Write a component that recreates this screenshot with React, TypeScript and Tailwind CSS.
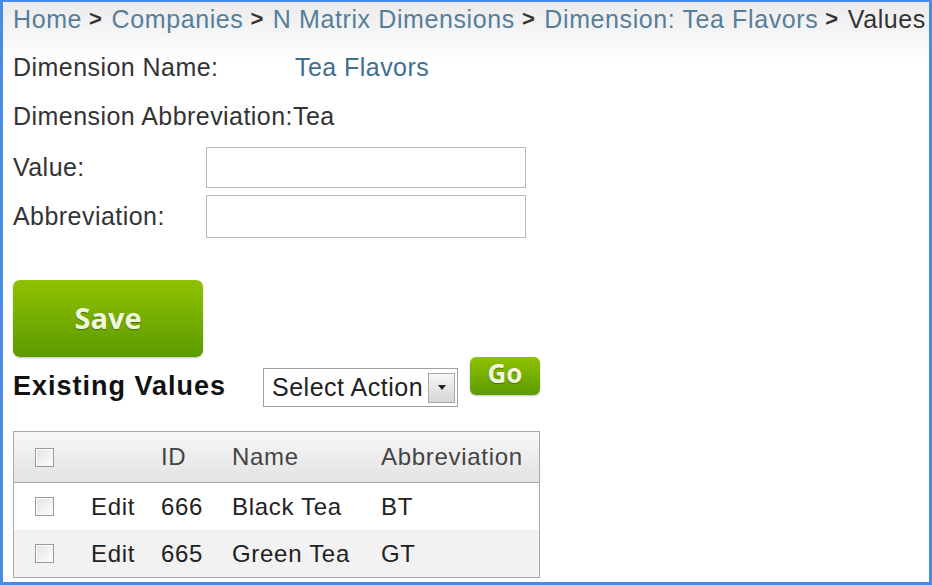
import React from 'react'

const crumbs = ['Home', 'Companies', 'N Matrix Dimensions', 'Dimension: Tea Flavors']

const rows = [
  { id: 666, name: 'Black Tea', abbr: 'BT' },
  { id: 665, name: 'Green Tea', abbr: 'GT' },
]

function Box() {
  return (
    <span className="block w-[19px] h-[19px] border border-[#9a9a9a] bg-[linear-gradient(135deg,#e2e2e2,#ffffff)] shadow-[inset_1px_1px_0_#fff]" />
  )
}

export default function App() {
  return (
    <div className="w-[932px] h-[585px] box-border border-[3px] border-t-2 border-[#4a8ae6] bg-[linear-gradient(to_bottom,#ebebeb_0px,#ffffff_62px)] font-['Liberation_Sans',Arial,sans-serif] text-[#333] overflow-hidden">
      {/* Breadcrumb */}
      <div className="pl-[10px] h-[34px] flex items-center text-[25px] leading-none whitespace-nowrap tracking-[0.6px]">
        {crumbs.map((c) => (
          <React.Fragment key={c}>
            <span className="text-[#567e9b]">{c}</span>
            <span className="font-bold text-[#333] text-[22px] ml-[7px] mr-[9px]">&gt;</span>
          </React.Fragment>
        ))}
        <span className="text-[#333]">Values</span>
      </div>

      <div className="pl-[10px] text-[25px] leading-none tracking-[0.45px]">
        <div className="mt-[14px] flex items-center h-[34px]">
          <span className="w-[282px]">Dimension Name:</span>
          <span className="text-[#3f6f8f]">Tea Flavors</span>
        </div>
        <div className="mt-[15px] flex items-center h-[34px]">
          Dimension Abbreviation:Tea
        </div>

        {/* Inputs */}
        <div className="mt-[14px] flex items-center">
          <span className="w-[193px]">Value:</span>
          <input className="w-[320px] h-[41px] border border-[#b9b9b9] bg-white outline-none" />
        </div>
        <div className="mt-[7px] flex items-center">
          <span className="w-[193px]">Abbreviation:</span>
          <input className="w-[320px] h-[43px] border border-[#b9b9b9] bg-white outline-none" />
        </div>

        <button className="mt-[42px] w-[190px] h-[77px] rounded-[7px] bg-[linear-gradient(to_bottom,#8fc200,#5c9a00)] shadow-[0_1px_2px_rgba(0,0,0,0.25)] font-['Open_Sans',sans-serif] font-bold text-[29px] tracking-normal text-[#f1f6df] [text-shadow:0_1px_1px_rgba(0,0,0,0.35)] flex items-center justify-center pb-[3px]">
          Save
        </button>

        {/* Existing Values bar */}
        <div className="flex items-start">
          <div className="mt-[13px] h-[32px] flex items-center w-[250px] font-bold text-[#111] text-[27px] tracking-[1px]">
            Existing Values
          </div>
          <div className="mt-[11px] w-[195px] h-[39px] border border-[#a0a0a0] bg-white flex items-center justify-between pl-[8px] pr-[2px]">
            <span className="text-[25px] tracking-[0.5px] text-[#222]">Select Action</span>
            <span className="w-[27px] h-[30px] border border-[#a8a8a8] bg-[linear-gradient(to_bottom,#f6f6f6,#d6d6d6)] flex items-center justify-center">
              <span className="w-0 h-0 border-l-[4px] border-r-[4px] border-t-[5px] border-l-transparent border-r-transparent border-t-[#222]" />
            </span>
          </div>
          <button className="ml-[12px] w-[70px] h-[38px] rounded-[6px] bg-[linear-gradient(to_bottom,#8fc200,#5c9a00)] shadow-[0_1px_2px_rgba(0,0,0,0.25)] font-['Open_Sans',sans-serif] font-bold text-[26px] tracking-normal text-[#f1f6df] [text-shadow:0_1px_1px_rgba(0,0,0,0.35)] flex items-center justify-center pb-[6px]">
            Go
          </button>
        </div>

        {/* Table */}
        <div className="mt-[24px] w-[527px] border border-[#a9a9a9] text-[24px] tracking-[0.7px]">
          <div className="h-[51px] flex items-center border-b border-[#a9a9a9] bg-[linear-gradient(to_bottom,#f7f7f7,#e3e3e3)] text-[#444]">
            <span className="w-[77px] pl-[21px]"><Box /></span>
            <span className="w-[70px]" />
            <span className="w-[71px]">ID</span>
            <span className="w-[149px]">Name</span>
            <span>Abbreviation</span>
          </div>
          {rows.map((r, i) => (
            <div key={r.id} className={`h-[47px] flex items-center text-[#222] ${i % 2 ? 'bg-[#f2f2f2]' : 'bg-white'}`}>
              <span className="w-[77px] pl-[21px]"><Box /></span>
              <span className="w-[70px]">Edit</span>
              <span className="w-[71px]">{r.id}</span>
              <span className="w-[149px]">{r.name}</span>
              <span>{r.abbr}</span>
            </div>
          ))}
        </div>
      </div>
    </div>
  )
}
